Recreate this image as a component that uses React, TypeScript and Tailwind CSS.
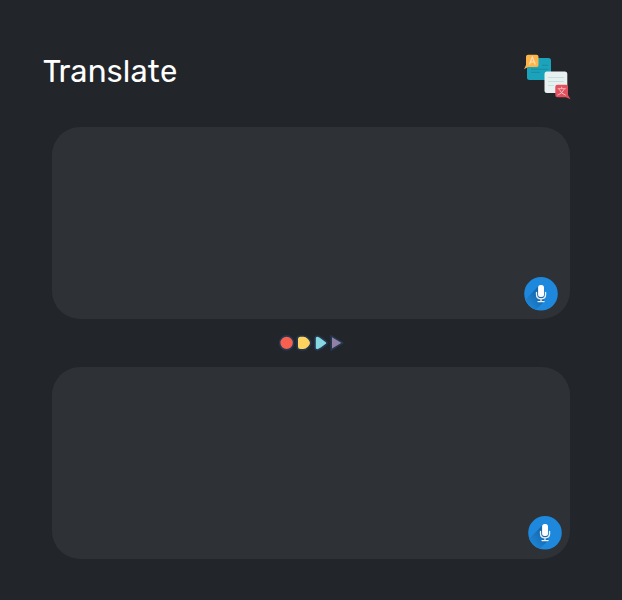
import React from "react";

function Mic() {
  return (
    <svg viewBox="0 0 34 34" className="block h-[34px] w-[34px]" aria-hidden="true">
      <defs>
        <clipPath id="mic-disc">
          <circle cx="17" cy="16.8" r="16.8" />
        </clipPath>
        <linearGradient id="mic-shade" x1="1" y1="0" x2="0" y2="1">
          <stop offset="0.3" stopColor="#1769ad" />
          <stop offset="0.85" stopColor="#1e88dc" />
        </linearGradient>
      </defs>
      <circle cx="17" cy="16.8" r="16.8" fill="#1e88dc" />
      <path d="M14.5 9 L0 24 V34 H10 L20 25 V9 Z" fill="url(#mic-shade)" clipPath="url(#mic-disc)" />
      <rect x="14.1" y="8" width="5.9" height="12" rx="2.5" fill="#ffffff" />
      <path
        d="M12.5 15.5 V17.5 C12.5 23.3 21.6 23.3 21.6 17.5 V15.5 M17 21.6 V24.5 M14 24.6 H20.1"
        fill="none"
        stroke="#e8eef3"
        strokeWidth="1.3"
        strokeLinecap="round"
      />
    </svg>
  );
}

function TranslateIcon() {
  return (
    <svg viewBox="0 0 48 48" className="block h-12 w-12" aria-hidden="true">
      <rect x="4" y="6" width="24" height="22" rx="2.5" fill="#1ba3bb" />
      <path d="M19 13.3H25M8 17.3H25M8 20.3H17" stroke="#168ca3" strokeWidth="1" fill="none" />
      <path d="M5 2.7H13.5Q15.5 2.7 15.5 4.7V13Q15.5 15 13.5 15H5L1 17.2L3 13V4.7Q3 2.7 5 2.7Z" fill="#fdb44b" />
      <path d="M6.4 12.5L9.3 5L12.3 12.5M7.6 10H11" stroke="#ffe3b5" strokeWidth="1.1" fill="none" />
      <rect x="21.5" y="19.5" width="22.8" height="21.5" rx="2.5" fill="#e8f1f0" />
      <path d="M25 25.5H41M25 29.5H41M25 33.5H31" stroke="#bce0dc" strokeWidth="0.9" fill="none" />
      <path d="M34.3 32.8H43Q45 32.8 45 34.8V43L47.5 47.2L43 45.2H34.3Q32.3 45.2 32.3 43.2V34.8Q32.3 32.8 34.3 32.8Z" fill="#e1505c" />
      <path d="M34.7 36.7H42.7M38.7 34.7V36.7M36.2 37.2Q38.2 41.9 42.7 43.2M41.2 37.2Q38.9 41.9 34.5 43.2" stroke="#f8c5c8" strokeWidth="0.9" fill="none" />
    </svg>
  );
}

function Arrows() {
  return (
    <svg viewBox="0 0 66 18" className="block h-[18px] w-[66px]" aria-hidden="true">
      <g stroke="#243853" strokeWidth="1.6" strokeLinejoin="round">
        <circle cx="8.6" cy="8.9" r="7" fill="#f7604f" />
        <path d="M22.5 2H25.5C29 2 32.8 6.5 32.8 9C32.8 11.5 29 15.9 25.5 15.9H22.5Q19.2 15.9 19.2 12.6V5.3Q19.2 2 22.5 2Z" fill="#ffd45e" />
        <path d="M38.9 2Q40.5 1.7 43.6 4L48.3 7.6Q49.8 9 48.3 10.3L43.6 14Q40.5 16.2 38.9 15.9Q37 15.6 37 14V4Q37 2.4 38.9 2Z" fill="#86d7df" />
        <path d="M53.2 1.9L64.8 8.9L53.2 16Z" fill="#9180a4" />
      </g>
    </svg>
  );
}

function TextPanel({ micInset }: { micInset: string }) {
  return (
    <section className={`flex h-48 w-[518px] items-end justify-end rounded-[28px] bg-[#2e3135] ${micInset}`}>
      <button type="button" aria-label="Voice input" className="rounded-full">
        <Mic />
      </button>
    </section>
  );
}

export default function App() {
  return (
    <main className="h-[600px] w-[622px] overflow-hidden bg-[#22262a] pt-[52px]">
      <header className="flex h-[75px] items-start justify-between pr-[51px] pl-[43px]">
        <h1 className="font-['Rubik','Inter',sans-serif] text-[31px] leading-10 tracking-[0.2px] text-white">
          Translate
        </h1>
        <TranslateIcon />
      </header>
      <div className="flex flex-col pl-[52px]">
        <TextPanel micInset="pr-3 pb-2" />
        <div className="flex h-12 w-[518px] items-center justify-center">
          <Arrows />
        </div>
        <TextPanel micInset="pr-2 pb-[9px]" />
      </div>
    </main>
  );
}
